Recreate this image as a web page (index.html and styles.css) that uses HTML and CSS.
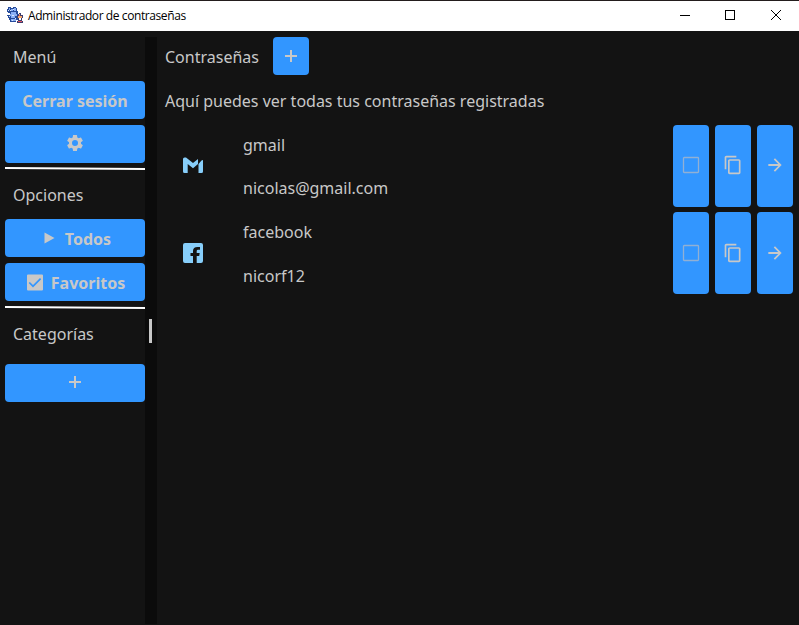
FILE: index.html
```
<!DOCTYPE html>
<html lang="es">
<head>
<meta charset="utf-8">
<title>Administrador de contraseñas</title>
<link rel="stylesheet" href="styles.css">
</head>
<body>
<svg class="defs" aria-hidden="true">
  <symbol id="plus" viewBox="0 0 20 20"><path d="M9 4h2v5h5v2h-5v5H9v-5H4V9h5z"/></symbol>
  <symbol id="box" viewBox="0 0 20 20"><rect x="2.500" y="2.500" width="15" height="15" rx=".8" fill="none" stroke="currentColor" stroke-width="1.300"/></symbol>
  <symbol id="copy" viewBox="0 0 24 24"><path d="M16 1H4c-1.100 0-2 .9-2 2v14h2V3h12V1zm3 4H8c-1.100 0-2 .9-2 2v14c0 1.100.9 2 2 2h11c1.100 0 2-.9 2-2V7c0-1.100-.9-2-2-2zm0 16H8V7h11v14z"/></symbol>
  <symbol id="arrow" viewBox="0 0 24 24"><path d="M12 4l-1.500 1.500L15.900 10.900H4v2.200h11.900l-5.400 5.400L12 20l8-8z"/></symbol>
</svg>
<header class="titlebar">
  <svg class="app-icon" viewBox="0 0 16 16" shape-rendering="crispEdges">
    <path fill="#264b9b" d="M1 0h3v1h2V0h3v1h1v3h1v3h1v6h-3v2H3v-2H2v-2H1V9H0V8h3V6H1V5H0V2h1z"/>
    <path fill="#8aaff5" d="M2 1h1v2H2zM4 2h2v2H4zM7 1h2v3H7zM4 5h5v2H4zM3 7h7v2H3zM4 9h4v2H4zM4 12h3v2H4zM7 12h2v2H7z"/>
    <path fill="#dce9ff" d="M6 2h1v1H6zM3 3h1v1H3zM5 8h2v1H5zM2 9h1v1H2zM5 13h1v1H5zM1 3h1v1H1zM8 11h1v1H8z"/>
    <path fill="#3d3d6d" d="M10 8h2V6h2v2h2v3h-1v3h1v2h-6v-2h1v-3h-1z"/>
    <path fill="#f3a66b" d="M12 7h1v2h2v2h-4V9h1z"/>
    <path fill="#e55a63" d="M12 8h1v1h-1zM11 14h4v1h-4z"/>
    <path fill="#fff" d="M12 11h2v2h-2z"/>
  </svg>
  <span class="title">Administrador de contraseñas</span>
  <div class="controls">
    <svg viewBox="0 0 46 30" shape-rendering="crispEdges"><path d="M18 14.500h10"/></svg>
    <svg viewBox="0 0 46 30" shape-rendering="crispEdges"><path d="M18.500 9.500h9v9h-9z"/></svg>
    <svg viewBox="0 0 46 30"><path d="M18 9l10 10M28 9L18 19"/></svg>
  </div>
</header>
<main class="app">
  <nav class="sidebar">
    <div class="label">Menú</div>
    <button class="btn">Cerrar sesión</button>
    <button class="btn symbol"><svg class="icon" viewBox="0 0 24 24"><path d="M19.140 12.940c.04-.3.060-.61.060-.94 0-.32-.02-.64-.07-.94l2.030-1.580c.18-.14.230-.41.120-.61l-1.920-3.320c-.12-.22-.37-.29-.59-.22l-2.390.96c-.5-.38-1.030-.7-1.620-.94l-.36-2.540c-.04-.24-.24-.41-.48-.41h-3.840c-.24 0-.43.17-.47.41l-.36 2.540c-.59.24-1.130.57-1.620.94l-2.390-.96c-.22-.08-.47 0-.59.22L2.740 8.870c-.12.210-.08.470.12.610l2.030 1.580c-.05.3-.09.630-.09.940s.02.640.07.940l-2.030 1.580c-.18.140-.23.410-.12.610l1.920 3.320c.12.220.37.290.59.220l2.390-.96c.5.380 1.030.7 1.620.94l.36 2.540c.05.240.24.410.48.410h3.840c.24 0 .44-.17.470-.41l.36-2.540c.59-.24 1.130-.56 1.620-.94l2.390.96c.22.080.47 0 .59-.22l1.920-3.320c.12-.22.070-.47-.12-.61zM12 15.600A3.600 3.600 0 1 1 12 8.400a3.600 3.600 0 0 1 0 7.200z"/></svg></button>
    <svg class="rule" viewBox="0 0 140 4"><path d="M0 0L140 1V3L0 2z"/></svg>
    <div class="label options">Opciones</div>
    <button class="btn"><svg class="icon play" viewBox="0 0 20 20"><path d="M5.500 3.500v11l10-5.500z"/></svg>Todos</button>
    <button class="btn"><svg class="icon check" viewBox="0 0 20 20"><path fill-rule="evenodd" d="M3 1.500h14q1 0 1 1v14q0 1-1 1H3q-1 0-1-1v-14q0-1 1-1zm5 10.500L4.900 8.900l-1.200 1.200L8 14.400l8.200-8.200L15 5z"/></svg>Favoritos</button>
    <svg class="rule second" viewBox="0 0 140 4"><path d="M0 0L140 1V3L0 2z"/></svg>
    <div class="label categories">Categorías</div>
    <button class="btn symbol"><svg class="icon"><use href="#plus"/></svg></button>
  </nav>
  <div class="splitter"><i></i></div>
  <section class="content">
    <div class="heading"><span>Contraseñas</span><button class="btn add"><svg class="icon"><use href="#plus"/></svg></button></div>
    <p class="intro">Aquí puedes ver todas tus contraseñas registradas</p>
    <article class="entry first">
      <svg class="brand" viewBox="0 0 20 20"><path d="M0 4Q0 2.500 1.500 2.500H3L10 8l5-4v5l-5 4.200L4.700 9v9H1.500Q0 18 0 16.500zM15.500 9L18.500 5.500L20 5v11.500q0 1.500-1.500 1.500h-3z"/></svg>
      <div class="details"><span>gmail</span><span>nicolas@gmail.com</span></div>
      <button class="btn action faint"><svg class="icon"><use href="#box"/></svg></button>
      <button class="btn action"><svg class="icon"><use href="#copy"/></svg></button>
      <button class="btn action"><svg class="icon"><use href="#arrow"/></svg></button>
    </article>
    <article class="entry">
      <svg class="brand" viewBox="0 0 20 20"><path d="M2 0h16q2 0 2 2v16q0 2-2 2h-4.300v-7h2.500l.5-3h-3V8q0-1.200 1.300-1.200H17V4h-2.500Q10 4 10 8v2H7.500v3H10v7H2q-2 0-2-2V2q0-2 2-2z"/></svg>
      <div class="details"><span>facebook</span><span>nicorf12</span></div>
      <button class="btn action faint"><svg class="icon"><use href="#box"/></svg></button>
      <button class="btn action"><svg class="icon"><use href="#copy"/></svg></button>
      <button class="btn action"><svg class="icon"><use href="#arrow"/></svg></button>
    </article>
  </section>
</main>
</body>
</html>
```
FILE: styles.css
```
* { box-sizing: border-box; }
body { margin: 0; height: 625px; overflow: hidden; background: #131313; color: #c8c8c8; font: 16px/22px "Noto Sans", sans-serif; }
svg { display: block; flex: none; }
.defs { display: none; }
.titlebar { height: 31px; display: flex; align-items: center; padding-left: 7px; border-top: 1px solid #231d1d; background: #fff; color: #000; font: 12px/16px "Open Sans", sans-serif; }
.app-icon { width: 16px; height: 16px; margin-bottom: 2px; }
.title { margin-left: 5px; letter-spacing: -0.41px; }
.controls { margin-left: auto; display: flex; }
.controls svg { width: 46px; height: 30px; fill: none; stroke: #000; stroke-width: 1; }
.controls svg + svg { margin-left: -1px; }
.controls svg + svg + svg { margin-left: 0; }
.app { height: 594px; padding-top: 6px; display: flex; }
.sidebar { width: 145px; padding-left: 5px; }
.label { height: 40px; padding: 9px 0 0 8px; }
.btn { display: flex; align-items: center; justify-content: center; width: 140px; height: 38px; margin: 0; padding: 1px 0 0; border: 0; border-radius: 4px; background: #3296ff; color: #c8c8c8; font: bold 16px/22px "Noto Sans", sans-serif; }
.label + .btn { margin-top: 4px; }
.btn + .btn { margin-top: 6px; }
.symbol { padding: 0 0 2px; }
.icon { width: 20px; height: 20px; fill: currentColor; }
.play, .check { margin-right: 6px; }
.rule { width: 140px; height: 4px; margin-top: 4px; fill: #fff; }
.options { height: 44px; padding-top: 13px; }
.second { margin-top: 5px; }
.categories { height: 50px; padding-top: 13px; }
.splitter { width: 12px; background: #0b0b0b; display: flex; align-items: center; justify-content: center; margin-bottom: 1px; }
.splitter i { width: 3px; height: 24px; margin-right: 1px; background: #c8c8c8; }
.content { flex: 1; padding: 0 6px 0 8px; }
.heading { display: flex; height: 38px; align-items: center; }
.heading span { width: 108px; padding-top: 2px; }
.add { width: 36px; padding: 0; }
.intro { height: 50px; margin: 0; padding-top: 15px; }
.entry { display: flex; align-items: center; height: 82px; margin-bottom: 5px; }
.brand { width: 20px; height: 20px; margin-left: 18px; fill: #87cefa; }
.details { flex: 1; padding: 2px 0 0 40px; display: flex; flex-direction: column; gap: 22px; }
.action { width: 36px; height: 82px; padding: 0; }
.entry .btn + .btn { margin: 0 0 0 6px; }
.faint { color: #91b0d4; }
.first .brand { margin-bottom: 2px; }
.first .details { gap: 21px; padding-top: 1px; }
.first .action { padding-bottom: 2px; }
```
